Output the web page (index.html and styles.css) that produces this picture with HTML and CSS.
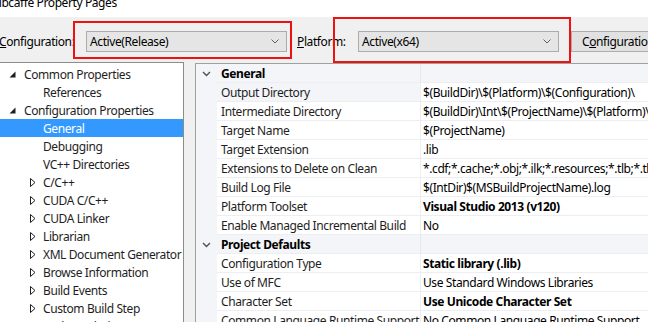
FILE: index.html
```html
<!DOCTYPE html>
<html>
<head>
<meta charset="utf-8">
<link rel="stylesheet" href="styles.css">
</head>
<body>
<div class="window">
  <div class="titlebar"><div class="title-text">libcaffe Property Pages</div></div>
  <div class="dialog">
    <div class="toolbar">
      <div class="lbl lbl-config"><u>C</u>onfiguration:</div>
      <div class="combo combo-config">
        <span>Active(Release)</span>
        <svg class="chev" width="8" height="5" viewBox="0 0 8 5"><polyline points="0.5,0.5 4,4 7.5,0.5" fill="none" stroke="#606060" stroke-width="1"/></svg>
      </div>
      <div class="lbl lbl-platform"><u>P</u>latform:</div>
      <div class="combo combo-platform">
        <span>Active(x64)</span>
        <svg class="chev" width="8" height="5" viewBox="0 0 8 5"><polyline points="0.5,0.5 4,4 7.5,0.5" fill="none" stroke="#606060" stroke-width="1"/></svg>
      </div>
      <div class="button">C<u>o</u>nfiguration Manager...</div>
    </div>
    <div class="panels">
      <div class="tree">
        <div class="node l0"><svg class="exp" width="7" height="7" viewBox="0 0 7 7"><polygon points="6.5,0.5 6.5,6.5 0.5,6.5" fill="#1e1e1e"/></svg><span>Common Properties</span></div>
        <div class="node l1 leaf"><span>References</span></div>
        <div class="node l0"><svg class="exp" width="7" height="7" viewBox="0 0 7 7"><polygon points="6.5,0.5 6.5,6.5 0.5,6.5" fill="#1e1e1e"/></svg><span>Configuration Properties</span></div>
        <div class="node l1 leaf selected"><span>General</span></div>
        <div class="node l1 leaf"><span>Debugging</span></div>
        <div class="node l1 leaf"><span>VC++ Directories</span></div>
        <div class="node l1"><svg class="col" width="6" height="9" viewBox="0 0 6 9"><polygon points="0.5,0.5 5,4.5 0.5,8.5" fill="#fff" stroke="#1e1e1e" stroke-width="1"/></svg><span>C/C++</span></div>
        <div class="node l1"><svg class="col" width="6" height="9" viewBox="0 0 6 9"><polygon points="0.5,0.5 5,4.5 0.5,8.5" fill="#fff" stroke="#1e1e1e" stroke-width="1"/></svg><span>CUDA C/C++</span></div>
        <div class="node l1"><svg class="col" width="6" height="9" viewBox="0 0 6 9"><polygon points="0.5,0.5 5,4.5 0.5,8.5" fill="#fff" stroke="#1e1e1e" stroke-width="1"/></svg><span>CUDA Linker</span></div>
        <div class="node l1"><svg class="col" width="6" height="9" viewBox="0 0 6 9"><polygon points="0.5,0.5 5,4.5 0.5,8.5" fill="#fff" stroke="#1e1e1e" stroke-width="1"/></svg><span>Librarian</span></div>
        <div class="node l1"><svg class="col" width="6" height="9" viewBox="0 0 6 9"><polygon points="0.5,0.5 5,4.5 0.5,8.5" fill="#fff" stroke="#1e1e1e" stroke-width="1"/></svg><span>XML Document Generator</span></div>
        <div class="node l1"><svg class="col" width="6" height="9" viewBox="0 0 6 9"><polygon points="0.5,0.5 5,4.5 0.5,8.5" fill="#fff" stroke="#1e1e1e" stroke-width="1"/></svg><span>Browse Information</span></div>
        <div class="node l1"><svg class="col" width="6" height="9" viewBox="0 0 6 9"><polygon points="0.5,0.5 5,4.5 0.5,8.5" fill="#fff" stroke="#1e1e1e" stroke-width="1"/></svg><span>Build Events</span></div>
        <div class="node l1"><svg class="col" width="6" height="9" viewBox="0 0 6 9"><polygon points="0.5,0.5 5,4.5 0.5,8.5" fill="#fff" stroke="#1e1e1e" stroke-width="1"/></svg><span>Custom Build Step</span></div>
        <div class="node l1"><svg class="col" width="6" height="9" viewBox="0 0 6 9"><polygon points="0.5,0.5 5,4.5 0.5,8.5" fill="#fff" stroke="#1e1e1e" stroke-width="1"/></svg><span>Code Analysis</span></div>
      </div>
      <div class="grid">
        <div class="row cat">
          <div class="gut"><svg width="9" height="6" viewBox="0 0 9 6"><polyline points="1,1 4.5,4.5 8,1" fill="none" stroke="#505050" stroke-width="1.4"/></svg></div>
          <div class="name">General</div>
          <div class="val"></div>
        </div>
        <div class="row sel"><div class="gut"></div><div class="name">Output Directory</div><div class="val">$(BuildDir)\$(Platform)\$(Configuration)\</div></div>
        <div class="row"><div class="gut"></div><div class="name">Intermediate Directory</div><div class="val">$(BuildDir)\Int\$(ProjectName)\$(Platform)\$(Configuration)\</div></div>
        <div class="row"><div class="gut"></div><div class="name">Target Name</div><div class="val">$(ProjectName)</div></div>
        <div class="row"><div class="gut"></div><div class="name">Target Extension</div><div class="val">.lib</div></div>
        <div class="row"><div class="gut"></div><div class="name">Extensions to Delete on Clean</div><div class="val">*.cdf;*.cache;*.obj;*.ilk;*.resources;*.tlb;*.tli;*.tlh;*.tmp</div></div>
        <div class="row"><div class="gut"></div><div class="name">Build Log File</div><div class="val">$(IntDir)$(MSBuildProjectName).log</div></div>
        <div class="row"><div class="gut"></div><div class="name">Platform Toolset</div><div class="val b">Visual Studio 2013 (v120)</div></div>
        <div class="row"><div class="gut"></div><div class="name">Enable Managed Incremental Build</div><div class="val">No</div></div>
        <div class="row cat">
          <div class="gut"><svg width="9" height="6" viewBox="0 0 9 6"><polyline points="1,1 4.5,4.5 8,1" fill="none" stroke="#505050" stroke-width="1.4"/></svg></div>
          <div class="name">Project Defaults</div>
          <div class="val"></div>
        </div>
        <div class="row"><div class="gut"></div><div class="name">Configuration Type</div><div class="val b">Static library (.lib)</div></div>
        <div class="row"><div class="gut"></div><div class="name">Use of MFC</div><div class="val">Use Standard Windows Libraries</div></div>
        <div class="row"><div class="gut"></div><div class="name">Character Set</div><div class="val b">Use Unicode Character Set</div></div>
        <div class="row"><div class="gut"></div><div class="name">Common Language Runtime Support</div><div class="val">No Common Language Runtime Support</div></div>
      </div>
    </div>
  </div>
  <div class="mark mark-config"></div>
  <div class="mark mark-platform"></div>
</div>
</body>
</html>
```

FILE: styles.css
```css
* { box-sizing: border-box; }
html, body {
  margin: 0;
  padding: 0;
  width: 648px;
  height: 322px;
  overflow: hidden;
  background: #f0f0f0;
}
.window {
  position: relative;
  width: 648px;
  height: 322px;
  overflow: hidden;
  font-family: "Noto Sans", "Open Sans", sans-serif;
  font-size: 12px;
  letter-spacing: -0.4px;
  color: #1e1e1e;
}
.titlebar {
  height: 17px;
  background: #fff;
  overflow: hidden;
}
.title-text {
  margin-top: -3px;
  margin-left: -4px;
  line-height: 12px;
  white-space: nowrap;
  color: #000;
}
.dialog {
  background: #f0f0f0;
}
.toolbar {
  display: flex;
  align-items: center;
  height: 45px;
  padding-top: 14px;
  padding-bottom: 10px;
  white-space: nowrap;
}
.lbl {
  flex: none;
  color: #000;
}
.lbl-config { width: 87px; margin-left: -1px; }
.lbl-platform { width: 61px; margin-left: 10px; }
.combo {
  flex: none;
  height: 21px;
  display: flex;
  align-items: center;
  justify-content: space-between;
  background: #e5e5e5;
  border: 1px solid #acacac;
  padding: 0 7px 0 3px;
  color: #000;
}
.combo-config { width: 201px; }
.combo-platform { width: 201px; }
.chev { display: block; flex: none; }
.button {
  flex: none;
  height: 21px;
  width: 150px;
  margin-left: 12px;
  background: #e1e1e1;
  border: 1px solid #adadad;
  padding-left: 10px;
  display: flex;
  align-items: center;
  color: #000;
}
.panels {
  display: flex;
  align-items: flex-start;
  height: 260px;
}
.tree {
  flex: none;
  width: 185px;
  height: 262px;
  margin-left: -1px;
  background: #fff;
  border: 1px solid #8c8c8c;
  padding-top: 2px;
  overflow: hidden;
}
.node {
  height: 18px;
  display: flex;
  align-items: center;
  white-space: nowrap;
}
.node svg { flex: none; display: block; }
.node.l0 { padding-left: 9px; }
.node.l0 .exp { margin-right: 8px; }
.node.l1 { padding-left: 30px; }
.node.l1 .col { margin-right: 7px; }
.node.leaf { padding-left: 43px; }
.node.selected { background: #3399ff; color: #fff; }
.grid {
  flex: none;
  width: 460px;
  height: 262px;
  margin-left: 11px;
  margin-top: 1px;
  border: 1px solid #a0a0a0;
  border-right: none;
  background: #fff;
  overflow: hidden;
}
.row {
  display: grid;
  grid-template-columns: 21px 204px 1fr;
  height: 19px;
  white-space: nowrap;
}
.row > div {
  display: flex;
  align-items: center;
  overflow: hidden;
}
.gut {
  background: #f3f5f9;
  justify-content: center;
}
.name {
  padding-left: 4px;
  border-bottom: 1px solid #eceef2;
  border-right: 1px solid #eceef2;
}
.val {
  padding-left: 2px;
  border-bottom: 1px solid #eceef2;
  color: #000;
}
.val.b { font-weight: bold; }
.row.sel .name { background: #f3f5f9; }
.row.cat .name, .row.cat .val { background: #f3f5f9; }
.row.cat .name { font-weight: bold; color: #000; border-right-color: #e6e8ec; }
.row.cat .gut { padding-top: 1px; }
.mark {
  position: absolute;
  border: 2px solid #ee1111;
}
.mark-config { left: 73px; top: 21px; width: 219px; height: 38px; }
.mark-platform { left: 333px; top: 17px; width: 238px; height: 46px; }
```
